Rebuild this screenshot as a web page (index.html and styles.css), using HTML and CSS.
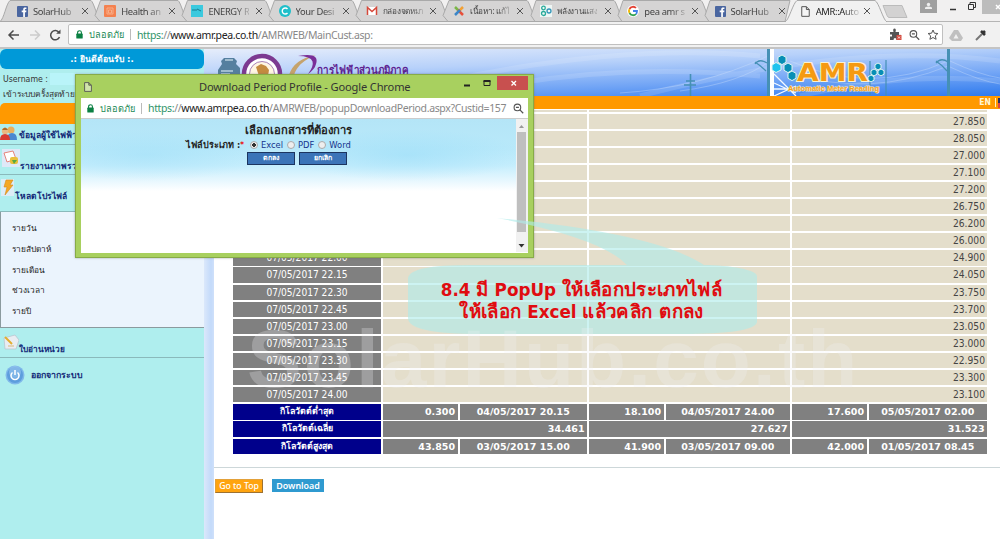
FILE: index.html
```html
<!DOCTYPE html>
<html lang="th">
<head>
<meta charset="utf-8">
<title>AMR::Automatic Meter Reading</title>
<link rel="stylesheet" href="styles.css">
</head>
<body>
<svg width="0" height="0" class="defs">
  <defs>
    <symbol id="page" viewBox="0 0 8 10"><path d="M.6.6h4.2l2.6 2.6v6.2H.6zM4.8.6v2.6h2.6" fill="#fafafa" fill-opacity=".5" stroke="#555" stroke-width=".9"/></symbol>
    <symbol id="fb" viewBox="0 0 11 11"><rect width="11" height="11" rx="1" fill="#4a66a0"/><path d="M6.2 11V6.3H4.7V4.6h1.5V3.4c0-1.4.8-2 2-2h1.2V3H8.5c-.5 0-.6.2-.6.6v1h1.5l-.2 1.7H7.9V11z" fill="#fff"/></symbol>
    <symbol id="lock" viewBox="0 0 7 9"><path d="M1.6 4V2.6a1.9 1.9 0 0 1 3.8 0V4" fill="none" stroke="#0b8043" stroke-width="1.1"/><rect x=".3" y="3.6" width="6.4" height="5" rx=".6" fill="#0b8043"/></symbol>
    <symbol id="mag" viewBox="0 0 11 11"><circle cx="4.4" cy="4.4" r="3.3" fill="none" stroke="#555" stroke-width="1.1"/><path d="M6.9 6.9l3.3 3.3M2.9 4.4h3" stroke="#555" stroke-width="1.3"/></symbol>
  </defs>
</svg>
<div class="screen">
  <header class="tabs">
    <svg class="tabshapes" width="1000" height="22" viewBox="0 0 1000 22">
      <path d="M0 21.5h1000" stroke="#b5b5b5"/>
      <g fill="#d5d4d4" stroke="#a9a9a9">
        <path d="M0 21.5C4 19 6 4 10 .5H91c3 2 6 17 10 21z"/>
        <path d="M95 15.500L100.500.5H178c3 2 6 17 10 21H100z"/>
        <path d="M182 15.500L187.500.5H265c3 2 6 17 10 21H187z"/>
        <path d="M269 15.500L274.500.5H352c3 2 6 17 10 21H274z"/>
        <path d="M356 15.500L361.500.5H440c3 2 6 17 10 21H361z"/>
        <path d="M443 15.500L449 .5H527c3 2 6 17 10 21H448z"/>
        <path d="M531 15.500L536 .5H614c3 2 6 17 10 21H535z"/>
        <path d="M618 15.500L623 .5H701c3 2 6 17 10 21H622z"/>
        <path d="M705 15.500L710 .5H790l-5 21h-76z"/>
      </g>
      <path d="M785 22c4-2 8-19 12-21.500h78c4 2 8 19.500 12 21.500z" fill="#f1f1f1" stroke="#a9a9a9"/>
      <path d="M786 22h100" stroke="#f1f1f1" stroke-width="2"/>
      <path d="M883 5.500h19l5 12h-18q-1 0-2-2z" fill="#d3d2d2" stroke="#bbb"/>
      <rect x="920" width="17" height="13" fill="#a0a0a0"/>
      <circle cx="928.500" cy="4.500" r="1.700" fill="#eee"/><path d="M925 9V7.500q3.500-2 7 0V9z" fill="#eee"/>
      <path d="M950 9.500h6" stroke="#333" stroke-width="1.500"/>
      <path d="M968.500 4.500h5v5h-5zM970 4V2.500h5.500v5H974" fill="none" stroke="#333"/>
      <rect x="982" width="18" height="14" fill="#bcbcbc"/><path d="M996 5l4 4M1000 5l-4 4" stroke="#fff" stroke-width="1.500"/>
    </svg>
    <div class="tab"><svg width="11" height="11"><use href="#fb"/></svg><span>SolarHub</span><i></i></div>
    <div class="tab"><svg width="12" height="12"><rect width="12" height="12" rx="1" fill="#f4814f"/><path d="M3 3h6v6H3zM4.500 5h3v3h-3z" fill="none" stroke="#f9ad88"/></svg><span>Health an</span><i></i></div>
    <div class="tab"><svg width="12" height="12"><rect width="12" height="12" fill="#3bc9de"/><path d="M1 5h5M6 4l4 2" stroke="#187d92"/></svg><span>ENERGY R</span><i></i></div>
    <div class="tab"><svg width="12" height="12"><circle cx="6" cy="6" r="6" fill="#1fbfca"/><path d="M8.500 4a3 3 0 1 0 0 4" fill="none" stroke="#fff" stroke-width="1.400"/></svg><span>Your Desi</span><i></i></div>
    <div class="tab"><svg width="12" height="12"><path d="M1 10V2h10v8z" fill="#fff"/><path d="M1.500 10V2.500L6 6.500l4.500-4V10" fill="none" stroke="#d6493b" stroke-width="1.500"/></svg><span class="th">กล่องจดหมา</span><i></i></div>
    <div class="tab"><svg width="12" height="12" fill="none" stroke-width="2.500"><path d="M2 2l5 5" stroke="#7ab648"/><path d="M10 2L5 7" stroke="#f2a034"/><path d="M10 10L5 5" stroke="#e8503a"/><path d="M2 10l5-5" stroke="#3c86c8"/></svg><span class="th">เนื้อหา: แก้ไ</span><i></i></div>
    <div class="tab"><svg width="12" height="12" fill="none" stroke="#2aab9a" stroke-width="1.300"><rect width="12" height="12" fill="#eef6f4" stroke="none"/><circle cx="3.500" cy="3" r="1.800"/><circle cx="3.500" cy="8.500" r="2"/><circle cx="9" cy="6" r="2" stroke="#3295b8"/></svg><span class="th">พลังงานแสง</span><i></i></div>
    <div class="tab"><svg width="12" height="12" fill="none" stroke-width="1.800"><circle cx="6" cy="6" r="6" fill="#fff"/><path d="M9 3A4 4 0 0 0 2.500 4" stroke="#e34133"/><path d="M2.500 4a4 4 0 0 0 0 4" stroke="#f3b605"/><path d="M2.500 8A4 4 0 0 0 9 9" stroke="#32a350"/><path d="M6 6h4q0 2-1 3" stroke="#4081ec"/></svg><span>pea amr s</span><i></i></div>
    <div class="tab"><svg width="11" height="11"><use href="#fb"/></svg><span>SolarHub</span><i></i></div>
    <div class="tab active"><svg width="11" height="11"><use href="#page"/></svg><span>AMR::Auto</span><i></i></div>
  </header>
  <div class="toolbar">
    <svg class="nav" width="66" height="26" fill="none" stroke-width="1.500"><path d="M19 13H9.500M13.500 8.500L9 13l4.500 4.500" stroke="#4c4c4c"/><path d="M30 13h9M35 8.500l4.500 4.500-4.500 4.500" stroke="#ccc"/><path d="M59 10.500A4.600 4.600 0 1 0 59.500 15" stroke="#4c4c4c"/><path d="M60.500 7.500v4.300h-4.300z" fill="#4c4c4c"/></svg>
    <div class="omni"><svg width="7" height="9"><use href="#lock"/></svg><span class="safe">ปลอดภัย</span><b></b><span class="url"><em>https:</em>//<strong>www.amr.pea.co.th</strong>/AMRWEB/MainCust.asp:</span>
      <svg class="acts" width="52" height="16"><path d="M0 5h3.500q-1-3.500 1-3.500t1 3.500H9v3q2-1 2 1t-2 1v3H6.500q0-2-1.500-2t-1.500 2H0V9.500h2v-2H0z" fill="#555"/><rect x="6.500" y="8" width="5" height="5" fill="#d64b3f"/><path d="M8 9.500l2 2M10 9.500l-2 2" stroke="#fff" stroke-width=".8"/><use href="#mag" x="19" y="2.500" width="11" height="11"/><path d="M43 3l1.400 3.200 3.500.3-2.600 2.400.8 3.400L43 10.500l-3.100 1.800.8-3.400-2.600-2.400 3.500-.3z" fill="none" stroke="#555"/></svg>
    </div>
    <svg class="ext" width="48" height="26"><path d="M11 8h4l5 8-2 3H9l-3-3z" fill="#c0c0c0"/><path d="M13 12l-2.500 4.500h5z" fill="#f1f1f1"/><path d="M33 18l6-6" stroke="#777" stroke-width="2"/><path d="M38 9l4 4M39 12l3-3" stroke="#333" stroke-width="2.600"/></svg>
  </div>
  <div class="body">
    <aside class="side">
      <div class="welcome">.: ยินดีต้อนรับ :.</div>
      <div class="user"><span>Username :</span><u></u></div>
      <div class="last">เข้าระบบครั้งสุดท้าย</div>
      <div class="menuhead"></div>
      <div class="item i1"><svg width="17" height="17"><circle cx="11" cy="5" r="3.500" fill="#e9b05e"/><path d="M7 15q0-7 5-7t5 7z" fill="#4a88d0"/><circle cx="5" cy="6" r="3.200" fill="#eab782"/><path d="M2 5q3-5 6 0z" fill="#ae6b28"/><path d="M0 15q0-6 5-6t5 6z" fill="#d93a32"/></svg><span>ข้อมูลผู้ใช้ไฟฟ้า</span></div>
      <div class="item i2"><svg width="18" height="18"><rect width="18" height="18" fill="#dfe9f8"/><path d="M2 4l9-2 3 8-9 3z" fill="#fff" stroke="#e5857b"/><rect x="8" y="8" width="8" height="7" rx="2" fill="#e9c13b"/><path d="M10 11h5l-3 4z" fill="#58a943"/></svg><span>รายงานภาพรวม</span></div>
      <div class="item i3"><svg width="14" height="20"><path d="M0 2h13v17H0z" fill="#dcecf6"/><path d="M5 3h7L9 8h3L4 18l2-8H3z" fill="#f4a824" stroke="#d68817" stroke-width=".6"/></svg><span>โหลดโปรไฟล์</span></div>
      <div class="sub"><span>รายวัน</span><span>รายสัปดาห์</span><span>รายเดือน</span><span>ช่วงเวลา</span><span>รายปี</span></div>
      <div class="item i4"><svg width="16" height="16"><path d="M1 4l11-3 4 5-3 9H2z" fill="#e9edf2" stroke="#b8c2cc" stroke-width=".7"/><path d="M2 3l7 7" stroke="#e2ae32" stroke-width="2"/><path d="M5 12h6" stroke="#d9b77c"/></svg><span>ใบอ่านหน่วย</span></div>
      <div class="item i5"><svg width="20" height="20"><circle cx="10" cy="10" r="9.500" fill="#7fb8ea"/><circle cx="10" cy="10" r="8" fill="#5d9ddd"/><circle cx="10" cy="7" r="6" fill="#9ac6f0" opacity=".6"/><path d="M7.500 7.500a4 4 0 1 0 5 0M10 5v5" fill="none" stroke="#fff" stroke-width="1.500"/></svg><span>ออกจากระบบ</span></div>
    </aside>
    <div class="gutter"></div>
    <main class="content">
      <div class="banner">
        <svg width="796" height="47" viewBox="204 48 796 47">
          <g stroke="#fff" fill="none" opacity=".13" stroke-width="5"><path d="M380 95Q600 40 760 55M450 95Q600 60 760 75M640 95Q850 40 1000 60M800 95Q900 70 1000 80"/></g>
          <g stroke="#dceafd" fill="none" opacity=".45" stroke-width=".7"><path d="M620 92q80-5 148-37M680 90q60-8 90-30M790 60q80 35 158 0M790 72q80 25 158-7M950 60q30 14 50 17M950 66q30 14 50 17"/></g>
          <g stroke="#4590b5" fill="none"><path d="M768.500 48v47" stroke-width="3"/><path d="M755 63q4-6 12-1M755 61q6 4 11 9" stroke-width="1.300"/><path d="M690.500 73v22M684 84h12M686 80h9" stroke-width="1.600"/><path d="M948.500 48v47" stroke-width="3"/><path d="M936 62q5-6 12-1M936 60q6 4 11 10" stroke-width="1.300"/><path d="M870 60v34M886 59v36" stroke-width="1.200"/></g>
          <path d="M772.500 48v47M774 73l22 22M774 82l22 10M774 95l22-10M774 88h18" stroke="#f5faff" fill="none" stroke-width="1.300"/><path d="M772 48v47" stroke="#fff" stroke-width="4"/>
          <g stroke="#dff5ef" stroke-width="1"><path d="M782 54l4 2.300v5l-4 2.300-4-2.300v-5zM788 62l4 2.300v5l-4 2.300-4-2.300v-5zM792 70l4 2.300v5l-4 2.300-4-2.300v-5z" fill="#078eb5"/><path d="M776 61.500l5 2.500v5l-5 2.500-4-2.500v-5z" fill="#1fc3ee"/><path d="M878 62l3 1.700v3.500l-3 1.700-3-1.700v-3.500zM881 68l3 1.700v3.500l-3 1.700-3-1.700v-3.500zM874 68l3 1.700v3.500l-3 1.700-3-1.700v-3.500zM871 74l3 1.700v3.500l-3 1.700-3-1.700v-3.500z" fill="#078eb5"/></g>
          <text x="797" y="79.500" class="amr" textLength="71" lengthAdjust="spacingAndGlyphs">AMR</text>
          <text x="788" y="90" class="amrsub" textLength="91" lengthAdjust="spacingAndGlyphs">Automatic Meter Reading</text>
          <path d="M224 57h10l3 3-1 3 4 4v11h-22v-9l4-6-1-3z" fill="#557f9f"/><path d="M225 59h8M221 70h12M221 73h9" stroke="#b8d1e0" stroke-width="1.500"/>
          <circle cx="262" cy="73" r="18" fill="#fff" stroke="#7c3a91" stroke-width="4.500"/><circle cx="262" cy="73" r="12.500" fill="#fff6e2" stroke="#a983b8"/><path d="M256 66l5-3 5 2 3 4-1 6h-9z" fill="#c48b40"/>
          <path d="M289 74Q294 58 316 54q-18 7-22 20z" fill="#c5a36d"/><path d="M298 55q22-4 18 8-1 5-8 10 6-8 4.500-12.500-2-5.500-14.500-5.500z" fill="#7a2f98"/>
          <text x="317" y="73" class="peath" textLength="91" lengthAdjust="spacingAndGlyphs">การไฟฟ้าส่วนภูมิภาค</text>
        </svg>
      </div>
      <div class="lang"><span>EN</span><b></b><i></i></div>
      <div class="panel">
        <div class="strip"><s></s><s></s><s></s><s></s></div>
        <div class="table">
          <p class="t"></p><p></p><p></p><p>27.850</p>
          <p class="t"></p><p></p><p></p><p>28.050</p>
          <p class="t"></p><p></p><p></p><p>27.000</p>
          <p class="t"></p><p></p><p></p><p>27.100</p>
          <p class="t"></p><p></p><p></p><p>27.200</p>
          <p class="t"></p><p></p><p></p><p>26.750</p>
          <p class="t"></p><p></p><p></p><p>26.200</p>
          <p class="t"></p><p></p><p></p><p>26.000</p>
          <p class="t">07/05/2017 22.00</p><p></p><p></p><p>24.900</p>
          <p class="t">07/05/2017 22.15</p><p></p><p></p><p>24.050</p>
          <p class="t">07/05/2017 22.30</p><p></p><p></p><p>23.750</p>
          <p class="t">07/05/2017 22.45</p><p></p><p></p><p>23.700</p>
          <p class="t">07/05/2017 23.00</p><p></p><p></p><p>23.050</p>
          <p class="t">07/05/2017 23.15</p><p></p><p></p><p>23.000</p>
          <p class="t">07/05/2017 23.30</p><p></p><p></p><p>22.950</p>
          <p class="t">07/05/2017 23.45</p><p></p><p></p><p>23.300</p>
          <p class="t">07/05/2017 24.00</p><p></p><p></p><p>23.100</p>
          <p class="n">กิโลวัตต์ต่ำสุด</p><div><p class="g">0.300</p><p class="g c">04/05/2017 20.15</p></div><div><p class="g">18.100</p><p class="g c">04/05/2017 24.00</p></div><div><p class="g">17.600</p><p class="g c">05/05/2017 02.00</p></div>
          <p class="n">กิโลวัตต์เฉลี่ย</p><p class="g">34.461</p><p class="g">27.627</p><p class="g">31.523</p>
          <p class="n">กิโลวัตต์สูงสุด</p><div><p class="g">43.850</p><p class="g c">03/05/2017 15.00</p></div><div><p class="g">41.900</p><p class="g c">03/05/2017 09.00</p></div><div><p class="g">42.000</p><p class="g c">01/05/2017 08.45</p></div>
        </div>
      </div>
      <div class="btns"><span class="top">Go to Top</span><span class="dl">Download</span></div>
    </main>
  </div>
  <div class="popup">
    <div class="ptitle"><svg width="8" height="10"><use href="#page"/></svg><span>Download Period Profile - Google Chrome</span>
      <svg class="winctl" width="66" height="16"><path d="M2 10.500h6" stroke="#222" stroke-width="2"/><path d="M22 6h6v4.500h-6z" fill="none" stroke="#222"/><path d="M21.500 6h7" stroke="#222" stroke-width="2"/><rect x="35" y="1" width="31" height="14" fill="#c8504f"/><path d="M49.500 6l4.500 4.500M54 6l-4.500 4.500" stroke="#fff" stroke-width="1.300"/></svg></div>
    <div class="paddr"><svg width="7" height="9"><use href="#lock"/></svg><span class="safe">ปลอดภัย</span><b></b><span class="url"><em>https:</em>//<strong>www.amr.pea.co.th</strong>/AMRWEB/popupDownloadPeriod.aspx?Custid=157</span><svg class="pm" width="11" height="11"><use href="#mag"/></svg></div>
    <div class="ppage">
      <div class="pform">
        <h1>เลือกเอกสารที่ต้องการ</h1>
        <div class="types"><b>ไฟล์ประเภท :</b><sup>*</sup><i class="on"></i><span>Excel</span><i></i><span>PDF</span><i></i><span>Word</span></div>
        <div class="pbtns"><span>ตกลง</span><span>ยกเลิก</span></div>
      </div>
      <svg class="scroll" width="12" height="133"><rect width="12" height="133" fill="#f1f1f1"/><path d="M3 9l2.500-3L8 9z" fill="#999"/><rect x="1" y="13" width="9" height="100" fill="#bfbfbf"/><path d="M2.500 125h6l-3 3.500z" fill="#333"/></svg>
    </div>
  </div>
  <div class="callout">
    <svg width="350" height="120" viewBox="408 216 350 120"><path d="M497 218Q655 233 704 265C730 265 757 270 757 276V322Q755 334 680 334H480Q408 334 408 318V278Q410 265 470 265H627Q602 238 497 218z" fill="#aeecea" fill-opacity=".62"/></svg>
    <p>8.4 <span>มี</span> PopUp <span>ให้เลือกประเภทไฟล์</span><br><span>ให้เลือก</span> Excel <span>แล้วคลิก ตกลง</span></p>
  </div>
  <div class="mark">SolarHub.co.th</div>
</div>
</body>
</html>
```
FILE: styles.css
```css
* { box-sizing: border-box; }
body { margin: 0; font-family: "DejaVu Sans Condensed", "Noto Sans", sans-serif; overflow: hidden; }
.defs { position: absolute; }
.screen { position: relative; width: 1000px; height: 539px; overflow: hidden; background: #fff; display: flex; flex-direction: column; white-space: nowrap; }

.tabs { position: relative; height: 22px; flex: none; display: flex; padding-left: 17px; background: #f1f0f0; }
.tabshapes { position: absolute; left: 0; top: 0; }
.tab { position: relative; width: 87.200px; flex: none; display: flex; align-items: center; padding-right: 17px; font: 9.400px "Noto Sans", sans-serif; letter-spacing: -.35px; color: #444; }
.tab svg { flex: none; margin-right: 5px; }
.tab span { -webkit-mask-image: linear-gradient(90deg, #000 27px, rgba(0,0,0,.15) 43px); mask-image: linear-gradient(90deg, #000 27px, rgba(0,0,0,.15) 43px); }
.tab .th { font-size: 8.200px; letter-spacing: -.3px; }
.tab i { position: absolute; left: 64.500px; top: 8px; width: 6px; height: 6px; background: linear-gradient(45deg, transparent 43%, #555 43% 57%, transparent 57%), linear-gradient(-45deg, transparent 43%, #555 43% 57%, transparent 57%); }
.tab.active { padding-left: 0; color: #222; margin-left: -2px; }

.toolbar { height: 27px; flex: none; display: flex; align-items: center; background: #f1f1f1; border-bottom: 2px solid #c4c4c4; }
.nav { width: 66px; flex: none; }
.omni { width: 875px; height: 21px; margin-left: 2px; display: flex; align-items: center; background: #fff; border: 1px solid #c0c0c0; border-radius: 2px; padding-left: 7px; }
.safe { margin-left: 6px; width: 34px; font-size: 9.200px; color: #1e8a55; }
.omni b, .paddr b { width: 1px; height: 11px; background: #bbb; margin: 0 6px 0 7px; }
.url { font: 10.500px "Noto Sans", sans-serif; letter-spacing: -.37px; color: #888; }
.url em { font-style: normal; color: #30956a; }
.url strong { font-weight: 400; color: #222; }
.acts { margin-left: auto; }

.body { flex: 1; display: flex; min-height: 0; }
.side { width: 204px; background: #afeeee; }
.gutter { width: 10px; background: linear-gradient(90deg, #dbe8fb, #c3dafa 70%, #cfe0fa); }
.content { width: 786px; background: #fff; }
.banner { width: 796px; height: 47px; margin-left: -10px; position: relative; background: linear-gradient(178deg, #e6edfb 0, #b7d1fa 35%, #6fa3f5 70%, #2e7aee 100%); }
.banner svg { display: block; }
.amr { font: bold 24px "DejaVu Sans", sans-serif; fill: #f59a12; stroke: #fbf2cf; stroke-width: 2px; paint-order: stroke; }
.amrsub { font: bold 7.500px "Liberation Sans", sans-serif; fill: #f5a21e; stroke: #f9e6ba; stroke-width: 1px; paint-order: stroke; }
.peath { font: bold 11px "DejaVu Sans", sans-serif; fill: #5d2190; }
.lang { height: 13px; margin-left: -10px; background: #ff9900; display: flex; justify-content: flex-end; align-items: center; font: bold 8.500px/13px "DejaVu Sans Condensed", sans-serif; color: #fff6d8; }
.lang b { width: 1px; height: 9px; background: #fff0c0; margin: 0 2px 0 4px; }
.lang i { width: 2px; height: 10px; background: linear-gradient(#223063 50%, #d44 50%); }
.panel { height: 359px; border-bottom: 1px solid #cdd7d9; padding: 1px 13px 0 19px; }
.strip { height: 3.500px; padding-bottom: 2px; }
.strip, .table { display: grid; grid-template-columns: 148px 204px 201px 195px; column-gap: 2px; }
.strip s { background: #e3ddcb; }
.strip s:first-child { background: #808080; }
.table { grid-auto-rows: 15.150px; row-gap: 1.970px; }
.table p { margin: 0; background: #e4decb; text-align: right; font-size: 10.200px; line-height: 15px; padding-right: 2px; color: #444; }
.table .t { background: #808080; color: #fff; text-align: center; font-size: 10.100px; padding: 0; }
.table .n { background: #00008b; color: #fff; text-align: center; font-weight: bold; font-size: 8.800px; padding: 0; }
.table .g { background: #808080; color: #fff; font: bold 9.500px/15px "DejaVu Sans", sans-serif; padding-right: 2.500px; }
.table .g.c { text-align: center; padding: 0; }
.table div { display: grid; grid-template-columns: 74.500px 1fr; column-gap: 2px; }
.btns { display: flex; gap: 9px; padding: 11px 0 0 1px; align-items: flex-start; }
.btns span { color: #fff; text-align: center; }
.top { width: 48px; height: 14px; background: #ffa40f; border: 1px solid #e3a13a; border-right-color: #9d7132; border-bottom-color: #9d7132; font: 500 8.700px/12px "Noto Sans", sans-serif; }
.dl { width: 52px; height: 13px; background: #2f9ad0; font: 600 8.900px/13px "Noto Sans", sans-serif; }

.welcome { height: 20px; border-radius: 6px; background: #0099d8; color: #fff; text-align: center; font: bold 8.600px/20px "DejaVu Sans", sans-serif; }
.user { height: 19px; display: flex; align-items: center; padding-left: 3px; font-size: 8.700px; color: #333; }
.user u { width: 40px; height: 12px; background: #b9f4f9; margin-left: 2px; }
.last { height: 15px; line-height: 13px; padding-left: 3px; font-size: 8.400px; color: #333; }
.menuhead { height: 21px; background: #ff9900; border-radius: 5px 5px 0 0; }
.item { display: flex; align-items: flex-end; font-size: 8.500px; font-weight: bold; color: #142a78; border-bottom: 1px solid #8ab9bb; }
.item span { line-height: 13px; }
.i1 { height: 21px; padding: 0 0 2px 0; }
.i1 span { margin-left: 2px; }
.i2 { height: 30px; padding: 0 0 1px 2px; }
.i2 svg, .i3 svg, .i4 svg { margin-bottom: 6px; }
.i3 { height: 37px; padding: 0 0 8px 1px; }
.sub { height: 116px; background: #ebf4fd; border: solid #8b9a9e; border-width: 0 0 1px 1px; padding: 5px 0 0 11px; display: flex; flex-direction: column; font-size: 8.300px; color: #222; }
.sub span { height: 20.800px; line-height: 22px; }
.i4 { height: 30px; padding: 0 0 1px 3px; }
.i4 span { font-size: 8.300px; }
.i5 { height: 36px; border: 0; align-items: center; padding: 0 0 2px 5px; font-size: 8.800px; }
.i5 span { margin-left: 6px; }

.popup { position: absolute; left: 75px; top: 74px; width: 459px; height: 184px; background: #a8d05f; border: 1px solid #87ab48; box-shadow: 0 0 2px #6668; padding: 0 5px 5px; }
.ptitle { height: 23px; display: flex; align-items: center; padding-left: 3px; color: #333; font: 11.100px "Noto Sans", sans-serif; letter-spacing: -.15px; }
.ptitle span { margin-left: 107px; }
.winctl { margin: -8px 0 0 auto; }
.paddr { height: 21px; background: #fff; display: flex; align-items: center; padding-left: 6px; border-bottom: 1px solid #ccc; }
.paddr .url { width: 360px; letter-spacing: -.36px; }
.paddr .pm { margin-left: 5px; }
.ppage { height: 134px; display: flex; background: #fff; }
.pform { flex: 1; background: radial-gradient(ellipse 120px 26px at 15% 50%, #9fdff888, transparent), radial-gradient(ellipse 120px 26px at 75% 50%, #97dcf888, transparent), linear-gradient(#b4e5f7, #b9e9fa 40%, #c6eefd 65%, #e6f7fe 85%, #fff 100%); background-repeat: no-repeat; background-size: 100% 72px; display: flex; flex-direction: column; align-items: center; }
.pform h1 { margin: 5px 0 0; font-size: 11.200px; line-height: 14px; color: #222; }
.types { display: flex; align-items: center; height: 13px; font-size: 9.300px; color: #14328c; margin-left: -60px; }
.types b { font-size: 9px; color: #222; }
.types sup { color: #e00; font-weight: bold; line-height: 8px; margin-right: 6px; }
.types i { width: 8px; height: 8px; border: 1px solid #aaa; border-radius: 50%; background: #eee; margin: 0 3px 0 4px; }
.types .on { background: radial-gradient(#333 40%, #eee 50%); margin-left: 0; }
.pbtns { display: flex; gap: 4px; margin: 1px 3px 0 0; }
.pbtns span { width: 48px; height: 13px; background: #3b74b8; border: 1px solid #1c3560; color: #fff; text-align: center; font-size: 7px; font-weight: bold; line-height: 11px; }

.callout { position: absolute; left: 408px; top: 216px; width: 350px; height: 120px; }
.callout svg { display: block; }
.callout p { position: absolute; inset: 63px 3px auto 0; margin: 0; text-align: center; font: bold 16.800px/22px "DejaVu Sans", sans-serif; color: #e00c10; }
.callout span { font-size: 18.700px; line-height: 20px; letter-spacing: .35px; }
.mark { position: absolute; left: 247px; top: 309px; font: bold 82px/100px "Liberation Sans", sans-serif; letter-spacing: 2.100px; color: rgba(240, 240, 245, .27); }
```
